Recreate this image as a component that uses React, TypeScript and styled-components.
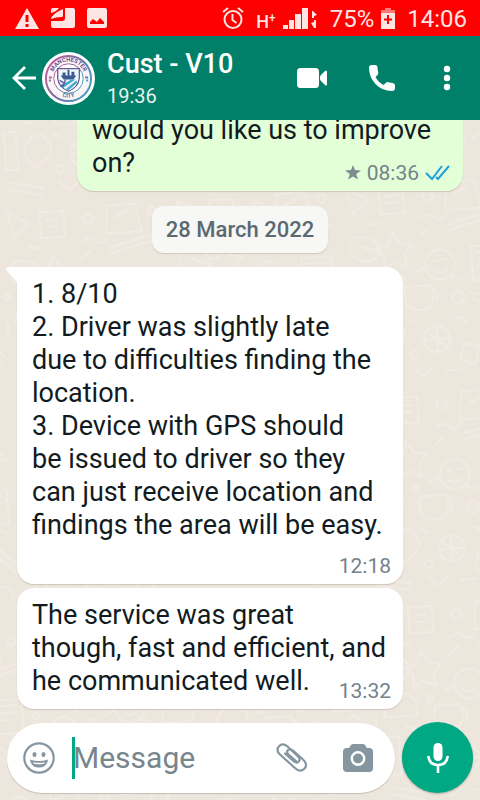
import React from "react";
import styled, { createGlobalStyle } from "styled-components";

const GlobalStyle = createGlobalStyle`
  * { box-sizing: border-box; }
  body { margin: 0; }
  body, button, input { font-family: Roboto, "Noto Sans", sans-serif; }
`;

const Screen = styled.div`
  position: relative;
  z-index: 0;
  display: flex;
  flex-direction: column;
  height: 100vh;
  overflow: hidden;
  background: #ede6dd;
`;

const WallpaperLayer = styled.svg`
  position: absolute;
  inset: 0;
  z-index: -1;
  width: 100%;
  height: 100%;
`;

const StatusBar = styled.div`
  display: flex;
  flex: none;
  align-items: center;
  justify-content: space-between;
  height: 36px;
  padding: 0 13px 0 15px;
  background: #ff0000;
  color: #ffe4e4;
`;

const StatusGroup = styled.div<{ $gap: number }>`
  display: flex;
  align-items: center;
  gap: ${(p) => p.$gap}px;
`;

const StatusText = styled.span`
  font-size: 24px;
  line-height: 36px;
  padding-top: 2px;
`;

const NetworkLabel = styled.span`
  display: flex;
  padding-top: 8px;
  font-size: 18px;
  font-weight: 500;
  line-height: 20px;
`;

const NetworkPlus = styled.sup`
  font-size: 12px;
  line-height: 12px;
`;

const Header = styled.header`
  display: flex;
  flex: none;
  align-items: center;
  height: 84px;
  padding: 0 22px 0 12px;
  background: #008069;
  color: #fff;
`;

const IconButton = styled.button`
  display: flex;
  flex: none;
  align-items: center;
  justify-content: center;
  padding: 0;
  border: 0;
  background: none;
  color: inherit;
  cursor: pointer;
`;

const BackButton = styled(IconButton)`
  gap: 6px;
`;

const Contact = styled.div`
  flex: 1;
  min-width: 0;
  padding: 4px 0 0 12px;
`;

const ContactName = styled.h1`
  margin: 0;
  font-size: 27px;
  font-weight: 500;
  line-height: 32px;
  white-space: nowrap;
`;

const ContactSeen = styled.div`
  font-size: 20px;
  line-height: 32px;
  color: #e6f3f0;
`;

const HeaderActions = styled.div`
  display: flex;
  align-items: center;
  gap: 41px;
`;

const Conversation = styled.main`
  display: flex;
  flex: 1;
  flex-direction: column;
  justify-content: flex-end;
  min-height: 0;
  overflow: hidden;
  padding: 0 17px 13px;
`;

const Bubble = styled.article<{ $sent?: boolean }>`
  position: relative;
  display: grid;
  flex: none;
  align-self: ${(p) => (p.$sent ? "flex-end" : "flex-start")};
  width: calc(100% - 60px);
  padding: 11px 12px 6px 15px;
  border-radius: 17px;
  background: ${(p) => (p.$sent ? "#e3ffd8" : "#fff")};
  box-shadow: 0 1px 1px rgba(110, 95, 80, 0.25);

  & + & { margin-top: 4px; }
`;

const BubbleTail = styled.svg`
  position: absolute;
  top: 0;
  left: -11px;
  width: 28px;
  height: 17px;
`;

const MessageText = styled.p<{ $ownLine?: boolean }>`
  grid-area: 1 / 1;
  margin: 0;
  padding-bottom: ${(p) => (p.$ownLine ? 36 : 5)}px;
  color: #111b21;
  font-size: 27px;
  line-height: 33px;
  white-space: pre-line;
`;

const MessageMeta = styled.div`
  display: flex;
  grid-area: 1 / 1;
  align-items: center;
  align-self: end;
  justify-self: end;
  gap: 6px;
  color: #75828a;
  font-size: 21px;
  line-height: 24px;
`;

const DateChip = styled.div`
  flex: none;
  align-self: center;
  margin: 15px 0 14px;
  padding: 0 14px;
  border-radius: 12px;
  background: #f7f7f6;
  box-shadow: 0 1px 1px rgba(110, 95, 80, 0.22);
  color: #5b6971;
  font-size: 22px;
  font-weight: 500;
  line-height: 47px;
`;

const Composer = styled.form`
  display: flex;
  flex: none;
  align-items: center;
  gap: 7px;
  padding: 0 7px 7px;
`;

const InputPill = styled.div`
  display: flex;
  flex: 1;
  align-items: center;
  min-width: 0;
  height: 70px;
  padding: 0 22px 0 16px;
  border-radius: 35px;
  background: #fff;
  box-shadow: 0 1px 1px rgba(110, 95, 80, 0.3);
  color: #8596a0;
`;

const Caret = styled.span`
  width: 3px;
  height: 42px;
  margin: 0 -2px 0 17px;
  background: #00a884;
`;

const MessageInput = styled.input`
  flex: 1;
  min-width: 0;
  padding: 0;
  border: 0;
  outline: 0;
  background: none;
  color: #111b21;
  font-size: 30px;
  line-height: 42px;

  &::placeholder { color: #77858d; opacity: 1; }
`;

const PillActions = styled.div`
  display: flex;
  align-items: center;
  gap: 36px;
`;

const VoiceButton = styled(IconButton)`
  width: 71px;
  height: 71px;
  border-radius: 50%;
  background: #00a884;
  box-shadow: 0 1px 2px rgba(60, 60, 50, 0.35);
  color: #fff;
`;

const Wallpaper = () => (
  <WallpaperLayer aria-hidden="true">
    <defs>
      <pattern id="doodles" width="170" height="210" patternUnits="userSpaceOnUse" patternTransform="translate(-20 -6) rotate(-4)">
        <g fill="none" stroke="#f2ebe5" strokeWidth="2" strokeLinecap="round" strokeLinejoin="round">
          <circle cx="100" cy="92" r="15" />
          <path d="M93 88h4M103 87h4M93 97q8 7 14-1" />
          <path d="M12 10l20 12-15 14zM44 12h24v26H44zM50 20h12M50 27h12" />
          <circle cx="92" cy="22" r="5" />
          <path d="M112 10h28l5 28h-36zM120 22l12-6M148 50l16-5M112 52l50-12M112 58l50-12" />
          <path d="M14 60q-8 16 6 22t22-8q-4-18-28-14zM22 68l12 6" />
          <path d="M54 56l7 12 13 2-9 9 2 13-13-6-10 7 1-13-9-8 13-3z" />
          <path d="M132 76h30v34h-30zM137 82h20M137 89h20M137 96h12" />
          <path d="M18 106q14-18 28 0v14H12zM64 112h26q6 24-13 24t-13-24zM90 116q10 0 4 12" />
          <circle cx="116" cy="126" r="6" />
          <path d="M132 128l34 32M138 124l32 30M128 122l8 2" />
          <path d="M14 140h12v38H14zM38 150q12-12 20 2t-16 24q-14-14-4-26z" />
          <circle cx="92" cy="166" r="13" />
          <path d="M82 158l20 17M92 153v26M79 166h26M118 172l16 4-6 18-14-6zM140 180q16-16 22 4" />
          <path d="M16 190l34 8M14 197l34 8M66 192l9 10 12-8M98 198h16" />
          <path d="M84 44q8-6 14 0t12-2M82 62l10-8M34 130l10 4M108 104l14 4M146 120q6-8 12 0" />
          <path d="M62 144l8 4M110 148q8-6 12 4M30 44q6 6 14 2M4 120v14M74 98l10-4" />
          <circle cx="60" cy="104" r="3" />
          <circle cx="6" cy="94" r="3" />
          <circle cx="156" cy="18" r="4" />
          <circle cx="68" cy="180" r="4" />
        </g>
      </pattern>
    </defs>
    <rect width="100%" height="100%" fill="url(#doodles)" />
  </WallpaperLayer>
);

const WarningIcon = () => (
  <svg width="24" height="21" viewBox="0 0 24 21" aria-label="Warning">
    <path fill="currentColor" fillRule="evenodd" d="M12 0l12 21H0zM10.500 7v7h3V7zM10.500 16v3h3v-3z" />
  </svg>
);

const StorageIcon = () => (
  <svg width="24" height="20" viewBox="0 0 24 20" aria-label="Notification">
    <path fill="currentColor" d="M14 0h8q2 0 2 2v16q0 2-2 2H2q-2 0-2-2v-5h11q3 0 3-3z" />
    <path fill="currentColor" d="M0 11Q1 6 12 1v7q0 1-1 1-6 0-11 2z" />
    <path fill="currentColor" d="M0 5V2q0-2 2-2h6Q5 4 0 5z" />
  </svg>
);

const PictureIcon = () => (
  <svg width="20" height="20" viewBox="0 0 20 20" aria-label="Picture">
    <path fill="currentColor" fillRule="evenodd" d="M2 0h16q2 0 2 2v16q0 2-2 2H2q-2 0-2-2V2q0-2 2-2zM3 16h14v-2l-4-4-3 4-4-3-3 3z" />
  </svg>
);

const AlarmIcon = () => (
  <svg width="22" height="23" viewBox="0 0 22 23" fill="none" stroke="currentColor" strokeWidth="2" aria-label="Alarm">
    <circle cx="11" cy="12.500" r="8.500" />
    <path d="M10.500 7v6l4 3M1 5l5-4M21 5l-5-4" />
  </svg>
);

const SignalIcon = () => (
  <svg width="35" height="21" viewBox="0 0 35 21" fill="currentColor" aria-label="Signal">
    <path d="M0 17h5v4H0zM6 12h5v9H6zM12 6h6v15h-6zM19 0h6v21h-6z" />
    <path d="M29 3h1l4 4-3 1v2h-2zM33 20h-2l-3-5 3-1v-2h2z" />
  </svg>
);

const BatteryIcon = () => (
  <svg width="14" height="21" viewBox="0 0 14 21" aria-label="Battery">
    <path fill="#ff7777" d="M4 0h6v2h4v4H0V2h4z" />
    <path fill="currentColor" d="M0 5h14v16H0z" />
    <path d="M7 7v9M3 11.500h8" stroke="#f00" strokeWidth="2" />
  </svg>
);

const BackIcon = () => (
  <svg width="24" height="24" viewBox="0 0 24 24" fill="none" stroke="currentColor" strokeWidth="2.800">
    <path d="M24 12H2M13 1L2 12l11 11" />
  </svg>
);

const Avatar = () => (
  <svg width="53" height="53" viewBox="0 0 54 54" role="img" aria-label="Manchester City crest">
    <defs>
      <linearGradient id="ring" x1="0" y1="0.2" x2="1" y2="0.8">
        <stop offset="0" stopColor="#c75d9a" />
        <stop offset="0.5" stopColor="#716b9e" />
        <stop offset="1" stopColor="#41a8c9" />
      </linearGradient>
      <path id="arcTop" d="M12.500 34A16.500 16.500 0 1 1 41.500 34" />
      <path id="arcBottom" d="M14 42Q27 51 40 42" />
    </defs>
    <circle cx="27" cy="27" r="27" fill="#fff" />
    <circle cx="27" cy="27" r="23" fill="#fbf5fa" stroke="url(#ring)" strokeWidth="2" />
    <circle cx="27" cy="27" r="15" fill="#fff" stroke="url(#ring)" strokeWidth="1" />
    <text fontSize="6" fontWeight="700" fill="#66558c" textAnchor="middle">
      <textPath href="#arcTop" startOffset="50%">MANCHESTER</textPath>
    </text>
    <text fontSize="6" fontWeight="700" fill="#507da7" textAnchor="middle">
      <textPath href="#arcBottom" startOffset="50%">CITY</textPath>
    </text>
    <path d="M16 17h22v10q-1 9-11 13-10-4-11-13z" fill="#eff7fc" stroke="#665b91" strokeWidth="1.300" />
    <path d="M19 24h16l-3 4H22zM21 21h3v3h-3zM26 18h2v6h-2zM30 20h3v4h-3z" fill="#3c5890" />
    <path d="M18 35l12-7 4 0-13 9zM24 38l11-9 1 2-9 8z" fill="#45a9cf" />
    <path d="M18 29l5 3-4 3M24 28l-3 8" stroke="#675da0" strokeWidth="1.500" fill="none" />
    <path d="M7 26h3M44 26h3M7 29h2M45 29h2" stroke="url(#ring)" strokeWidth="2" />
  </svg>
);

const VideoIcon = () => (
  <svg width="31" height="20" viewBox="0 0 31 20" fill="currentColor">
    <rect width="22" height="20" rx="3.500" />
    <path d="M23 9q0-1 1-2l4-4q2-1.500 2 1v12q0 2.500-2 1l-4-4q-1-1-1-2z" />
  </svg>
);

const PhoneIcon = () => (
  <svg width="26" height="26" viewBox="0 0 26 26" fill="currentColor">
    <path d="M3 0h3q2.500 0 2.500 2.500 0 2.500.7 5 .3 1.500-.7 2.500l-2 2q3 5.500 8 8l2.500-2.300q1-.9 2.400-.5 2.300.8 4.300.8 2.300 0 2.300 2.500V23q0 3-3 3-10 0-16.500-7Q0 12 0 3q0-3 3-3z" />
  </svg>
);

const MoreIcon = () => (
  <svg width="22" height="26" viewBox="0 0 22 26" fill="currentColor">
    <circle cx="11" cy="4" r="3.200" />
    <circle cx="11" cy="13" r="3.200" />
    <circle cx="11" cy="22" r="3.200" />
  </svg>
);

const StarIcon = () => (
  <svg width="16" height="16" viewBox="0 0 16 16" fill="#7f8d93" aria-label="Starred">
    <path d="M8 0l2 5 6 .4-4.800 3.700L13 14.500 8 11.500l-5 3 1.800-5.400L0 5.400 6 5z" />
  </svg>
);

const ReadIcon = () => (
  <svg width="26" height="17" viewBox="0 0 26 17" fill="none" stroke="#1d9fdd" strokeWidth="2" aria-label="Read">
    <path d="M1 8l6 6L17 1M11 12l2 2L24 1" />
  </svg>
);

const SmileIcon = () => (
  <svg width="32" height="32" viewBox="0 0 32 32">
    <circle cx="16" cy="16" r="14.700" fill="none" stroke="currentColor" strokeWidth="2.200" />
    <ellipse cx="11.500" cy="12.500" rx="2" ry="2.500" fill="currentColor" />
    <ellipse cx="20.500" cy="12.500" rx="2" ry="2.500" fill="currentColor" />
    <path fill="currentColor" d="M7 17.500q9 3 18 0-1 8-9 8t-9-8z" />
    <path fill="#fff" d="M10 20.200q6 1.300 12 0-.5 1.500-2 1.700-4 .8-8 0-1.500-.2-2-1.700z" />
  </svg>
);

const ClipIcon = () => (
  <svg width="31" height="29" viewBox="0 0 31 29" fill="none" stroke="currentColor" strokeWidth="2.200" strokeLinecap="round" strokeLinejoin="round">
    <path d="M20.500 18.500L12.500 11.500q-2.500-2.500-.5-4.500t5 .5l9.500 8.500q6 5.500 1.800 9.800-4.300 4.200-10-1.300L4 11.500Q-.5 7 3 3.200 6.800-.5 11.500 3.500M11.500 3.500L21 12.500q4 3.500 1.800 6t-6-1L9 10.500" />
  </svg>
);

const CameraIcon = () => (
  <svg width="30" height="28" viewBox="0 0 30 28">
    <path fill="currentColor" d="M10 0h10q1 0 2 1l2 3h2q4 0 4 4v16q0 4-4 4H4q-4 0-4-4V8q0-4 4-4h2l2-3q1-1 2-1z" />
    <circle cx="15" cy="14.500" r="6.200" fill="none" stroke="#fff" strokeWidth="2.400" />
  </svg>
);

const MicIcon = () => (
  <svg width="22" height="30" viewBox="0 0 22 30">
    <rect x="6.500" width="9" height="18" rx="4.500" fill="currentColor" />
    <path d="M1.200 13q1 9 9.800 9t9.800-9M11 22v8" fill="none" stroke="currentColor" strokeWidth="2.600" />
  </svg>
);

export default function App() {
  return (
    <>
      <GlobalStyle />
      <Screen>
        <Wallpaper />
        <StatusBar>
          <StatusGroup $gap={12}>
            <WarningIcon />
            <StorageIcon />
            <PictureIcon />
          </StatusGroup>
          <StatusGroup $gap={12}>
            <AlarmIcon />
            <StatusGroup $gap={7}>
              <NetworkLabel>H<NetworkPlus>+</NetworkPlus></NetworkLabel>
              <SignalIcon />
            </StatusGroup>
            <StatusGroup $gap={7}>
              <StatusText>75%</StatusText>
              <BatteryIcon />
            </StatusGroup>
            <StatusText>14:06</StatusText>
          </StatusGroup>
        </StatusBar>

        <Header>
          <BackButton aria-label="Back">
            <BackIcon />
            <Avatar />
          </BackButton>
          <Contact>
            <ContactName>Cust - V10</ContactName>
            <ContactSeen>19:36</ContactSeen>
          </Contact>
          <HeaderActions>
            <IconButton aria-label="Video call"><VideoIcon /></IconButton>
            <IconButton aria-label="Voice call"><PhoneIcon /></IconButton>
            <IconButton aria-label="More options"><MoreIcon /></IconButton>
          </HeaderActions>
        </Header>

        <Conversation>
          <Bubble $sent>
            <MessageText>{"would you like us to improve\non?"}</MessageText>
            <MessageMeta>
              <StarIcon />
              <time>08:36</time>
              <ReadIcon />
            </MessageMeta>
          </Bubble>
          <DateChip>28 March 2022</DateChip>
          <Bubble>
            <BubbleTail viewBox="0 0 28 17" aria-hidden="true">
              <path fill="#fff" d="M3 0h25v17H11v-2L1 4Q-1 0 3 0z" />
            </BubbleTail>
            <MessageText $ownLine>
              {"1. 8/10\n2. Driver was slightly late\ndue to difficulties finding the\nlocation.\n3. Device with GPS should\nbe issued to driver so they\ncan just receive location and\nfindings the area will be easy."}
            </MessageText>
            <MessageMeta><time>12:18</time></MessageMeta>
          </Bubble>
          <Bubble>
            <MessageText>
              {"The service was great\nthough, fast and efficient, and\nhe communicated well."}
            </MessageText>
            <MessageMeta><time>13:32</time></MessageMeta>
          </Bubble>
        </Conversation>

        <Composer onSubmit={(e) => e.preventDefault()}>
          <InputPill>
            <IconButton type="button" aria-label="Emoji"><SmileIcon /></IconButton>
            <Caret />
            <MessageInput aria-label="Message" placeholder="Message" />
            <PillActions>
              <IconButton type="button" aria-label="Attach"><ClipIcon /></IconButton>
              <IconButton type="button" aria-label="Camera"><CameraIcon /></IconButton>
            </PillActions>
          </InputPill>
          <VoiceButton type="button" aria-label="Record voice message"><MicIcon /></VoiceButton>
        </Composer>
      </Screen>
    </>
  );
}
